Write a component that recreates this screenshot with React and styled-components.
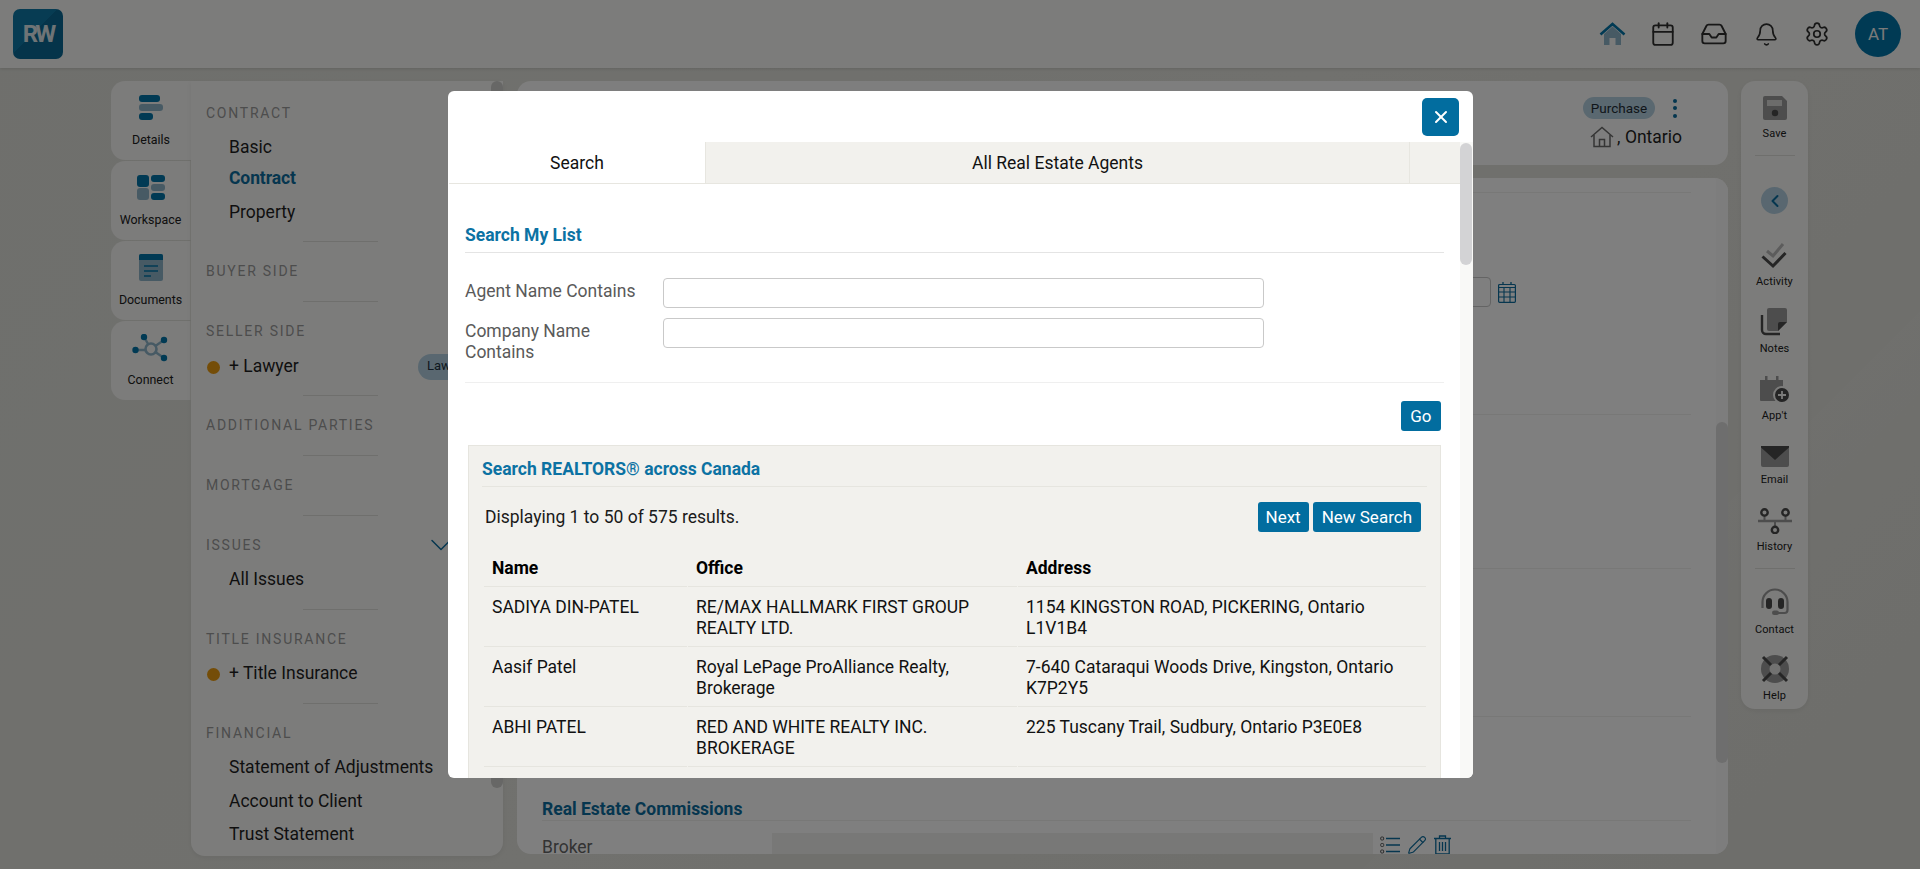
import React from "react";
import styled, { createGlobalStyle } from "styled-components";
import { Bell, Calendar, ChevronDown, ChevronLeft, Inbox, Pencil, Settings, X } from "lucide-react";

const Global = createGlobalStyle`
  html, body { margin: 0; padding: 0; height: 100%; overflow: hidden; }
  body { font-family: Roboto, "Liberation Sans", sans-serif; font-size: 17.5px; color: #1c1c1c; }
  * { box-sizing: border-box; }
`;

const Page = styled.div`
  width: 1920px;
  height: 869px;
  position: relative;
  overflow: hidden;
  background:
    linear-gradient(135deg, rgba(255,255,255,0) 80%, rgba(255,255,255,.05) 80%, rgba(255,255,255,0) 92%),
    linear-gradient(315deg, #dcdcd6 0%, #e2e2dc 50%, #dedfd9 100%);
`;

const Header = styled.header`
  height: 68px;
  background: #f9f9f6;
  display: flex;
  align-items: center;
  padding: 0 19px 0 13px;
  box-shadow: 0 1px 3px rgba(0,0,0,.12);
`;

const Logo = styled.div`
  width: 50px;
  height: 50px;
  border-radius: 7px;
  background: linear-gradient(135deg, #0e78a6 0 45%, #0a6894 45% 100%);
  color: #dfe8ec;
  display: flex;
  align-items: center;
  justify-content: center;
  font-weight: 700;
  font-size: 24px;
  letter-spacing: -3px;
`;

const HeaderIcons = styled.div`
  margin-left: auto;
  display: flex;
  align-items: center;
`;

const HeaderIcon = styled.span`
  display: flex;
  width: ${(p) => p.$w}px;
  justify-content: center;
  color: #2f2f2f;
`;

const Avatar = styled.div`
  width: 46px;
  height: 46px;
  margin-left: 25px;
  border-radius: 50%;
  background: #0074a8;
  color: #f4f4f4;
  display: flex;
  align-items: center;
  justify-content: center;
  font-size: 17px;
`;

const Body = styled.div`
  display: flex;
  align-items: flex-start;
  padding: 13px 0 0 111px;
`;

const SideTabs = styled.nav`
  width: 80px;
  display: flex;
  flex-direction: column;
  gap: 1px;
`;

const SideTab = styled.div`
  height: 79px;
  padding-top: 13px;
  border-radius: 14px 0 0 14px;
  background: #f8f8f6;
  border-right: ${(p) => (p.$active ? "0" : "1px solid #e8e8e2")};
  display: flex;
  flex-direction: column;
  align-items: center;
  font-size: 12.4px;
  line-height: 20px;
  color: #202020;
`;

const SideIcon = styled.div`
  height: 36px;
  svg { display: block; }
`;

const NavPanel = styled.aside`
  position: relative;
  width: 312px;
  height: 775px;
  padding: 22px 0 0 15px;
  background: #f9f9f7;
  border-radius: 0 0 14px 14px;
  box-shadow: 0 2px 5px rgba(0,0,0,.06);
`;

const NavThumb = styled.div`
  position: absolute;
  top: 0;
  right: 0;
  width: 12px;
  height: 707px;
  border-radius: 6px;
  background: #cfcfcc;
`;

const NavHeading = styled.div`
  height: 20px;
  line-height: 20px;
  padding-right: 44px;
  font-size: 14px;
  letter-spacing: 1.75px;
  color: #9a9a9a;
  display: flex;
  align-items: center;
  justify-content: space-between;
  svg { flex: none; color: #0c6d9e; }
`;

const NavItems = styled.div`
  margin-top: ${(p) => p.$top}px;
  display: flex;
  flex-direction: column;
  gap: ${(p) => p.$gap || 0}px;
`;

const NavItem = styled.div`
  height: 33px;
  line-height: 33px;
  font-size: 17.5px;
  padding-left: 23px;
  color: ${(p) => (p.$active ? "#0c6d9e" : "#1f1f1f")};
  font-weight: ${(p) => (p.$active ? 700 : 400)};
  position: relative;
  ${(p) => p.$active && "margin: -2px 0 1px; letter-spacing: -.1px;"}
`;

const Dot = styled.span`
  position: absolute;
  left: 1px;
  top: 11px;
  width: 13px;
  height: 13px;
  border-radius: 50%;
  background: #e99a10;
`;

const Pill = styled.span`
  position: absolute;
  left: 212px;
  top: 4px;
  width: 60px;
  height: 26px;
  border-radius: 13px;
  padding-left: 9px;
  line-height: 24px;
  font-size: 13px;
  background: #b2cfe0;
  color: #203240;
`;

const NavRule = styled.div`
  width: 75px;
  height: 1px;
  margin: ${(p) => p.$top}px 0 19px 97px;
  background: #dededa;
`;

const Middle = styled.div`
  width: 1211px;
  margin-left: 14px;
  display: flex;
  flex-direction: column;
  gap: 13px;
`;

const TopCard = styled.section`
  height: 84px;
  padding: 16px 46px 0 0;
  border-radius: 14px;
  background: #fdfdfc;
  display: flex;
  flex-direction: column;
  align-items: flex-end;
`;

const TagRow = styled.div`
  display: flex;
  align-items: center;
  gap: 18px;
  margin-right: 5px;
`;

const Tag = styled.span`
  width: 72px;
  height: 22px;
  border-radius: 11px;
  background: #b5d0e0;
  text-align: center;
  line-height: 23px;
  font-size: 13.5px;
  color: #1f2d36;
`;

const Dots = styled.span`
  display: flex;
  flex-direction: column;
  gap: 3.5px;
  i { width: 4px; height: 4px; border-radius: 50%; background: #0a6d9e; display: block; }
`;

const Place = styled.div`
  display: flex;
  align-items: center;
  gap: 3px;
  margin-top: 7px;
  font-size: 17.5px;
  color: #1f1f1f;
`;

const MainCard = styled.section`
  position: relative;
  height: 676px;
  border-radius: 14px;
  background: #ffffff;
  padding: 14px 37px 0 25px;
  overflow: hidden;
`;

const MainBar = styled.div`
  position: absolute;
  top: 0;
  right: 0;
  width: 12px;
  height: 100%;
  background: #fbfbfb;
`;

const MainThumb = styled.div`
  width: 12px;
  height: 341px;
  margin-top: 244px;
  border-radius: 6px;
  background: #dcdcdc;
`;

const MainRule = styled.div`
  height: 1px;
  margin-top: ${(p) => p.$top}px;
  background: #f0f0ee;
`;

const DateRow = styled.div`
  display: flex;
  align-items: center;
  justify-content: flex-end;
  gap: 7px;
  margin: 84px 175px 0 0;
`;

const DateBox = styled.div`
  width: 60px;
  height: 30px;
  border: 1px solid #c8c8c8;
  border-radius: 4px;
`;

const CommissionTitle = styled.h3`
  margin: 81px 0 0;
  height: 22px;
  line-height: 22px;
  font-size: 17.5px;
  color: #0c6d9e;
`;

const BrokerRow = styled.div`
  display: flex;
  align-items: flex-start;
  margin-top: 12px;
  height: 23px;
`;

const BrokerLabel = styled.span`
  width: 230px;
  height: 20px;
  margin-top: 4px;
  font-size: 17.5px;
  line-height: 20px;
  color: #666;
`;

const BrokerField = styled.div`
  width: 601px;
  height: 23px;
  background: #f0f0ee;
`;

const RowTools = styled.div`
  display: flex;
  align-items: center;
  gap: 7px;
  margin: 2px 0 0 7px;
  color: #0c6d9e;
`;

const Rail = styled.aside`
  width: 67px;
  height: 628px;
  margin-left: 13px;
  padding-top: 14px;
  border-radius: 14px;
  background: #f8f8f6;
  display: flex;
  flex-direction: column;
  align-items: center;
  box-shadow: 0 2px 5px rgba(0,0,0,.06);
`;

const RailItem = styled.div`
  height: ${(p) => p.$h}px;
  display: flex;
  flex-direction: column;
  align-items: center;
  font-size: 11px;
  letter-spacing: .1px;
  color: #202020;
  svg { display: block; margin-bottom: 6px; }
`;

const RailRule = styled.div`
  width: 40px;
  height: 1px;
  margin: ${(p) => p.$top}px 0 ${(p) => p.$bottom}px;
  background: #dededa;
`;

const BackCircle = styled.div`
  width: 27px;
  height: 27px;
  margin-bottom: 29px;
  border-radius: 50%;
  background: #b2cfe0;
  color: #0a6d9e;
  display: flex;
  align-items: center;
  justify-content: center;
`;

const Overlay = styled.div`
  position: absolute;
  inset: 0;
  background: rgba(0,0,0,.5);
`;

const Modal = styled.div`
  position: absolute;
  left: 448px;
  top: 91px;
  width: 1025px;
  height: 687px;
  border-radius: 6px;
  background: #fff;
  overflow: hidden;
`;

const CloseRow = styled.div`
  height: 51px;
  padding: 7px 14px 0 0;
  display: flex;
  justify-content: flex-end;
`;

const CloseButton = styled.button`
  width: 37px;
  height: 38px;
  padding: 0;
  border: 0;
  border-radius: 5px;
  background: #026d9f;
  color: #fff;
  display: flex;
  align-items: center;
  justify-content: center;
`;

const ModalBody = styled.div`
  display: flex;
  height: 636px;
`;

const ModalContent = styled.div`
  flex: 1;
  min-width: 0;
  padding-left: 1px;
`;

const ModalBar = styled.div`
  width: 13px;
  background: #f9f9f7;
`;

const ModalThumb = styled.div`
  width: 12px;
  height: 122px;
  margin-top: 1px;
  border-radius: 6px;
  background: #d3d3d5;
`;

const Tabs = styled.div`
  display: grid;
  grid-template-columns: 257px 704px 50px;
  height: 42px;
`;

const Tab = styled.div`
  background: ${(p) => (p.$active ? "#fff" : "#f2f1ed")};
  border-bottom: 1px solid #e7e6e0;
  border-right: 1px solid #e7e6e0;
  display: flex;
  align-items: center;
  justify-content: center;
  font-size: 17.5px;
  color: #111;
  &:last-child { border-right: 0; }
`;

const Form = styled.div`
  padding: 39px 16px 0;
`;

const FormTitle = styled.h2`
  margin: 0 0 25px;
  padding-bottom: 5px;
  height: 30px;
  line-height: 24px;
  font-size: 17.5px;
  font-weight: 700;
  color: #0c72a3;
  border-bottom: 1px solid #e4e4e4;
`;

const FieldRow = styled.div`
  display: flex;
  margin-bottom: 10px;
`;

const FieldLabel = styled.label`
  width: 198px;
  padding: 3px 14px 0 0;
  line-height: 21px;
  font-size: 17.5px;
  color: #5a5a5a;
`;

const FieldInput = styled.input`
  width: 601px;
  height: 30px;
  border: 1px solid #c9c9c9;
  border-radius: 4px;
  background: #fff;
`;

const FormRule = styled.div`
  height: 1px;
  margin-top: 19px;
  background: #efefef;
`;

const GoRow = styled.div`
  display: flex;
  justify-content: flex-end;
  margin: 18px 3px 14px 0;
`;

const BlueButton = styled.button`
  height: 30px;
  padding: 0 ${(p) => p.$pad}px;
  border: 0;
  border-radius: 3px;
  background: #026d9f;
  color: #fff;
  font-family: Roboto, sans-serif;
  font-size: 17px;
`;

const ResultsPanel = styled.div`
  margin: 0 3px;
  height: 400px;
  padding: 10px 13px 0;
  background: #f2f1ed;
  border: 1px solid #e6e5df;
`;

const ResultsTitle = styled.h3`
  margin: 0;
  height: 31px;
  line-height: 26px;
  font-size: 17.5px;
  font-weight: 700;
  color: #0c72a3;
  border-bottom: 1px solid #e6e5df;
`;

const ResultsBar = styled.div`
  display: flex;
  justify-content: space-between;
  align-items: center;
  padding: 15px 6px 0 3px;
  font-size: 17.5px;
  color: #1a1a1a;
`;

const ButtonGroup = styled.div`
  display: flex;
  gap: 4px;
`;

const Table = styled.table`
  width: 944px;
  margin: 17px 0 0 1px;
  table-layout: fixed;
  border-collapse: separate;
  border-spacing: 1px 0;
  color: #111;
  font-size: 17.5px;
  line-height: 21px;
  th, td {
    text-align: left;
    padding: 10px 8px 7px;
    vertical-align: top;
    border-bottom: 1px solid #e6e5df;
  }
  th { font-weight: 700; padding: 9px 8px 7px; color: #000; }
  td { height: 60px; }
`;

const agents = [
  ["SADIYA DIN-PATEL", "RE/MAX HALLMARK FIRST GROUP REALTY LTD.", "1154 KINGSTON ROAD, PICKERING, Ontario L1V1B4"],
  ["Aasif Patel", "Royal LePage ProAlliance Realty, Brokerage", "7-640 Cataraqui Woods Drive, Kingston, Ontario K7P2Y5"],
  ["ABHI PATEL", "RED AND WHITE REALTY INC. BROKERAGE", "225 Tuscany Trail, Sudbury, Ontario P3E0E8"],
];

const B = "#0275a8";
const L = "#8fb4c9";
const G = "#4a4a4a";
const M = "#9a9a9a";

const HomeIcon = () => (
  <svg width="27" height="24" viewBox="0 0 27 24">
    <path d="M5 12l8.5-7.5L22 12v11h-5.5v-7h-6v7H5z" fill={L} />
    <path d="M1.5 12.5L13.5 2l12 10.5" fill="none" stroke={B} strokeWidth="2.6" />
  </svg>
);

const DetailsIcon = () => (
  <svg width="26" height="26" viewBox="0 0 26 26">
    <rect x="1" y="1" width="21" height="7" rx="3" fill={B} />
    <rect x="1" y="10" width="24" height="7" rx="3" fill={L} />
    <rect x="1" y="19" width="14" height="7" rx="3" fill={B} />
  </svg>
);

const WorkspaceIcon = () => (
  <svg width="30" height="26" viewBox="0 0 30 26">
    <rect x="1" y="1" width="12" height="12" rx="3" fill={B} />
    <rect x="15" y="1" width="14" height="7" rx="3" fill={B} />
    <rect x="15" y="10" width="14" height="7" rx="3" fill={L} />
    <rect x="1" y="14" width="12" height="12" rx="3" fill={L} />
    <rect x="15" y="19" width="14" height="7" rx="3" fill={B} />
  </svg>
);

const DocumentsIcon = () => (
  <svg width="26" height="28" viewBox="0 0 26 28">
    <rect x="1" y="0" width="24" height="27" rx="2" fill={L} />
    <path d="M3 0h20a2 2 0 012 2v4H1V2a2 2 0 012-2z" fill={B} />
    <path d="M6 12h14M6 17h14M6 22h7" stroke={B} strokeWidth="1.4" />
  </svg>
);

const ConnectIcon = () => (
  <svg width="38" height="30" viewBox="0 0 38 30">
    <path d="M12 3l7 12M32 6L19 15M32 24L19 15M3 16h16" stroke={L} strokeWidth="2.4" />
    <circle cx="19" cy="15" r="5.5" fill="#f8f8f6" stroke={L} strokeWidth="2.6" />
    <circle cx="12" cy="3" r="3.2" fill={B} />
    <circle cx="32" cy="6" r="3.2" fill={B} />
    <circle cx="32" cy="24" r="3.2" fill={B} />
    <circle cx="3.5" cy="16" r="3.2" fill={B} />
  </svg>
);

const SaveIcon = () => (
  <svg width="26" height="26" viewBox="0 0 26 26">
    <path d="M3 1h17l5 5v17a2 2 0 01-2 2H3a2 2 0 01-2-2V3a2 2 0 012-2z" fill={M} />
    <rect x="5" y="5" width="15" height="6" fill="#d8d8d6" />
    <circle cx="13" cy="18" r="3.2" fill={G} />
  </svg>
);

const ActivityIcon = () => (
  <svg width="26" height="26" viewBox="0 0 26 26">
    <path d="M4 8l6 5L20 1" transform="translate(2 0)" fill="none" stroke="#b8b8b8" strokeWidth="3" />
    <path d="M1.5 13.5L12 23 24.5 10" fill="none" stroke={G} strokeWidth="3" />
  </svg>
);

const NotesIcon = () => (
  <svg width="28" height="28" viewBox="0 0 28 28">
    <path d="M2 7v15a4 4 0 004 4h14" fill="none" stroke={G} strokeWidth="2.4" />
    <path d="M9 0h16a2 2 0 012 2v12l-9 9H9a2 2 0 01-2-2V2a2 2 0 012-2z" fill={M} />
    <path d="M27 14h-7a2 2 0 00-2 2v7z" fill={G} />
  </svg>
);

const ApptIcon = () => (
  <svg width="33" height="28" viewBox="0 0 33 28">
    <path d="M3 5h22v21H3a1 1 0 01-1-1V6a1 1 0 011-1z" fill={M} />
    <path d="M2 5h23v5H2zM7 1h2.5v4H7zM18 1h2.5v4H18z" fill={M} />
    <circle cx="24" cy="20" r="8" fill={G} stroke="#f8f8f6" strokeWidth="2" />
    <path d="M24 16v8M20 20h8" stroke="#f8f8f6" strokeWidth="1.8" />
  </svg>
);

const EmailIcon = () => (
  <svg width="28" height="21" viewBox="0 0 28 21">
    <rect x="0" y="0" width="28" height="21" rx="2" fill={M} />
    <path d="M0 0h28v1.5L14 14 0 1.5z" fill={G} />
  </svg>
);

const HistoryIcon = () => (
  <svg width="36" height="27" viewBox="0 0 36 27">
    <path d="M1 14h34" stroke={M} strokeWidth="2.6" />
    <path d="M7.5 10v4M28.5 10v4M18 14v5" stroke={M} strokeWidth="2" />
    <circle cx="7.5" cy="5.5" r="3.2" fill="none" stroke={G} strokeWidth="2.4" />
    <circle cx="28.5" cy="5.5" r="3.2" fill="none" stroke={G} strokeWidth="2.4" />
    <circle cx="18" cy="23" r="3.2" fill="none" stroke={G} strokeWidth="2.4" />
  </svg>
);

const ContactIcon = () => (
  <svg width="30" height="30" viewBox="0 0 30 30">
    <path d="M2.5 21v-6a12.5 12.5 0 0125 0v8a3 3 0 01-3 3H17" fill="none" stroke={M} strokeWidth="2.2" />
    <rect x="6" y="11" width="6" height="11" rx="3" fill={G} />
    <rect x="18" y="11" width="6" height="11" rx="3" fill={G} />
    <rect x="12" y="23.5" width="7" height="4.5" rx="2.2" fill={M} />
  </svg>
);

const HelpIcon = () => (
  <svg width="28" height="28" viewBox="0 0 28 28">
    <circle cx="14" cy="14" r="14" fill={M} />
    <circle cx="14" cy="14" r="5.5" fill="#e4e4e2" />
    <path d="M2 2l8 8M26 2l-8 8M2 26l8-8M26 26l-8-8" stroke={G} strokeWidth="3" />
  </svg>
);

const HouseIcon = () => (
  <svg width="24" height="22" viewBox="0 0 24 22">
    <path d="M1 11L12 1.5 23 11" fill="none" stroke="#6a6a6a" strokeWidth="1.5" />
    <path d="M4 9v11.5h16V9M9.5 20.5v-7h5v7" fill="none" stroke="#6a6a6a" strokeWidth="1.5" />
  </svg>
);

const GridCalendar = () => (
  <svg width="18" height="21" viewBox="0 0 18 21">
    <path d="M5 0v3M13 0v3" stroke="#0c6d9e" strokeWidth="1.3" />
    <rect x=".6" y="2.5" width="16.8" height="17.8" rx="1" fill="none" stroke="#0c6d9e" strokeWidth="1.2" />
    <path d="M.6 5.5h16.8M.6 10h16.8M.6 15h16.8M6 5.5v15M12 5.5v15" stroke="#0c6d9e" strokeWidth="1.1" />
  </svg>
);

const ListIcon = () => (
  <svg width="20" height="18" viewBox="0 0 20 18">
    <path d="M6 2.5h14M6 9h14M6 15.5h14" stroke="#0c6d9e" strokeWidth="1.4" />
    <rect x=".7" y="1" width="3" height="3" rx="1" fill="none" stroke="#555" />
    <rect x=".7" y="7.5" width="3" height="3" rx="1" fill="none" stroke="#555" />
    <rect x=".7" y="14" width="3" height="3" rx="1" fill="none" stroke="#555" />
  </svg>
);

const TrashIcon = () => (
  <svg width="17" height="20" viewBox="0 0 17 20">
    <path d="M0 3.5h17M5.5 3V1h6v2" fill="none" stroke="#0c6d9e" strokeWidth="1.3" />
    <path d="M1.8 4v15h13.4V4M5.5 7v9M8.5 7v9M11.5 7v9" fill="none" stroke="#0c6d9e" strokeWidth="1.3" />
  </svg>
);

const sideTabs = [
  { label: "Details", icon: <DetailsIcon />, active: true },
  { label: "Workspace", icon: <WorkspaceIcon /> },
  { label: "Documents", icon: <DocumentsIcon /> },
  { label: "Connect", icon: <ConnectIcon /> },
];

export default function App() {
  return (
    <Page>
      <Global />
      <Header>
        <Logo>RW</Logo>
        <HeaderIcons>
          <HeaderIcon $w={27}><HomeIcon /></HeaderIcon>
          <HeaderIcon $w={74}><Calendar size={26} strokeWidth={1.7} /></HeaderIcon>
          <HeaderIcon $w={28}><Inbox size={28} strokeWidth={1.6} /></HeaderIcon>
          <HeaderIcon $w={76}><Bell size={25} strokeWidth={1.6} /></HeaderIcon>
          <HeaderIcon $w={26}><Settings size={26} strokeWidth={1.6} /></HeaderIcon>
          <Avatar>AT</Avatar>
        </HeaderIcons>
      </Header>
      <Body>
        <SideTabs>
          {sideTabs.map((t) => (
            <SideTab key={t.label} $active={t.active}>
              <SideIcon>{t.icon}</SideIcon>
              {t.label}
            </SideTab>
          ))}
        </SideTabs>
        <NavPanel>
          <NavThumb />
          <NavHeading>CONTRACT</NavHeading>
          <NavItems $top={8}>
            <NavItem>Basic</NavItem>
            <NavItem $active>Contract</NavItem>
            <NavItem>Property</NavItem>
          </NavItems>
          <NavRule $top={12} />
          <NavHeading>BUYER SIDE</NavHeading>
          <NavRule $top={20} />
          <NavHeading>SELLER SIDE</NavHeading>
          <NavItems $top={9}>
            <NavItem><Dot />+ Lawyer<Pill>Lawyer</Pill></NavItem>
          </NavItems>
          <NavRule $top={12} />
          <NavHeading>ADDITIONAL PARTIES</NavHeading>
          <NavRule $top={20} />
          <NavHeading>MORTGAGE</NavHeading>
          <NavRule $top={20} />
          <NavHeading>ISSUES<ChevronDown size={36} strokeWidth={1} /></NavHeading>
          <NavItems $top={8}>
            <NavItem>All Issues</NavItem>
          </NavItems>
          <NavRule $top={13} />
          <NavHeading>TITLE INSURANCE</NavHeading>
          <NavItems $top={8}>
            <NavItem><Dot />+ Title Insurance</NavItem>
          </NavItems>
          <NavRule $top={13} />
          <NavHeading>FINANCIAL</NavHeading>
          <NavItems $top={8} $gap={0.5}>
            <NavItem>Statement of Adjustments</NavItem>
            <NavItem>Account to Client</NavItem>
            <NavItem>Trust Statement</NavItem>
          </NavItems>
        </NavPanel>
        <Middle>
          <TopCard>
            <TagRow>
              <Tag>Purchase</Tag>
              <Dots><i /><i /><i /></Dots>
            </TagRow>
            <Place><HouseIcon />, Ontario</Place>
          </TopCard>
          <MainCard>
            <MainBar><MainThumb /></MainBar>
            <MainRule $top={0} />
            <DateRow><DateBox /><GridCalendar /></DateRow>
            <MainRule $top={107} />
            <MainRule $top={153} />
            <MainRule $top={147} />
            <CommissionTitle>Real Estate Commissions</CommissionTitle>
            <MainRule $top={0} />
            <BrokerRow>
              <BrokerLabel>Broker</BrokerLabel>
              <BrokerField />
              <RowTools><ListIcon /><Pencil size={20} strokeWidth={1.4} /><TrashIcon /></RowTools>
            </BrokerRow>
          </MainCard>
        </Middle>
        <Rail>
          <RailItem $h={60}><SaveIcon />Save</RailItem>
          <RailRule $top={0} $bottom={31} />
          <BackCircle><ChevronLeft size={20} strokeWidth={2.4} /></BackCircle>
          <RailItem $h={65}><ActivityIcon />Activity</RailItem>
          <RailItem $h={67}><NotesIcon />Notes</RailItem>
          <RailItem $h={71}><ApptIcon />App't</RailItem>
          <RailItem $h={61}><EmailIcon />Email</RailItem>
          <RailItem $h={61}><HistoryIcon />History</RailItem>
          <RailRule $top={0} $bottom={18} />
          <RailItem $h={68}><ContactIcon />Contact</RailItem>
          <RailItem><HelpIcon />Help</RailItem>
        </Rail>
      </Body>
      <Overlay>
        <Modal>
          <CloseRow>
            <CloseButton aria-label="Close"><X size={20} strokeWidth={2.4} /></CloseButton>
          </CloseRow>
          <ModalBody>
            <ModalContent>
              <Tabs>
                <Tab $active>Search</Tab>
                <Tab>All Real Estate Agents</Tab>
                <Tab />
              </Tabs>
              <Form>
                <FormTitle>Search My List</FormTitle>
                <FieldRow>
                  <FieldLabel>Agent Name Contains</FieldLabel>
                  <FieldInput />
                </FieldRow>
                <FieldRow>
                  <FieldLabel>Company Name Contains</FieldLabel>
                  <FieldInput />
                </FieldRow>
                <FormRule />
                <GoRow><BlueButton $pad={9.5}>Go</BlueButton></GoRow>
                <ResultsPanel>
                  <ResultsTitle>Search REALTORS® across Canada</ResultsTitle>
                  <ResultsBar>
                    <span>Displaying 1 to 50 of 575 results.</span>
                    <ButtonGroup>
                      <BlueButton $pad={8}>Next</BlueButton>
                      <BlueButton $pad={9}>New Search</BlueButton>
                    </ButtonGroup>
                  </ResultsBar>
                  <Table>
                    <colgroup>
                      <col style={{ width: 203 }} />
                      <col style={{ width: 329 }} />
                      <col style={{ width: 408 }} />
                    </colgroup>
                    <thead>
                      <tr><th>Name</th><th>Office</th><th>Address</th></tr>
                    </thead>
                    <tbody>
                      {agents.map((a) => (
                        <tr key={a[0]}>
                          <td>{a[0]}</td>
                          <td>{a[1]}</td>
                          <td>{a[2]}</td>
                        </tr>
                      ))}
                    </tbody>
                  </Table>
                </ResultsPanel>
              </Form>
            </ModalContent>
            <ModalBar><ModalThumb /></ModalBar>
          </ModalBody>
        </Modal>
      </Overlay>
    </Page>
  );
}
